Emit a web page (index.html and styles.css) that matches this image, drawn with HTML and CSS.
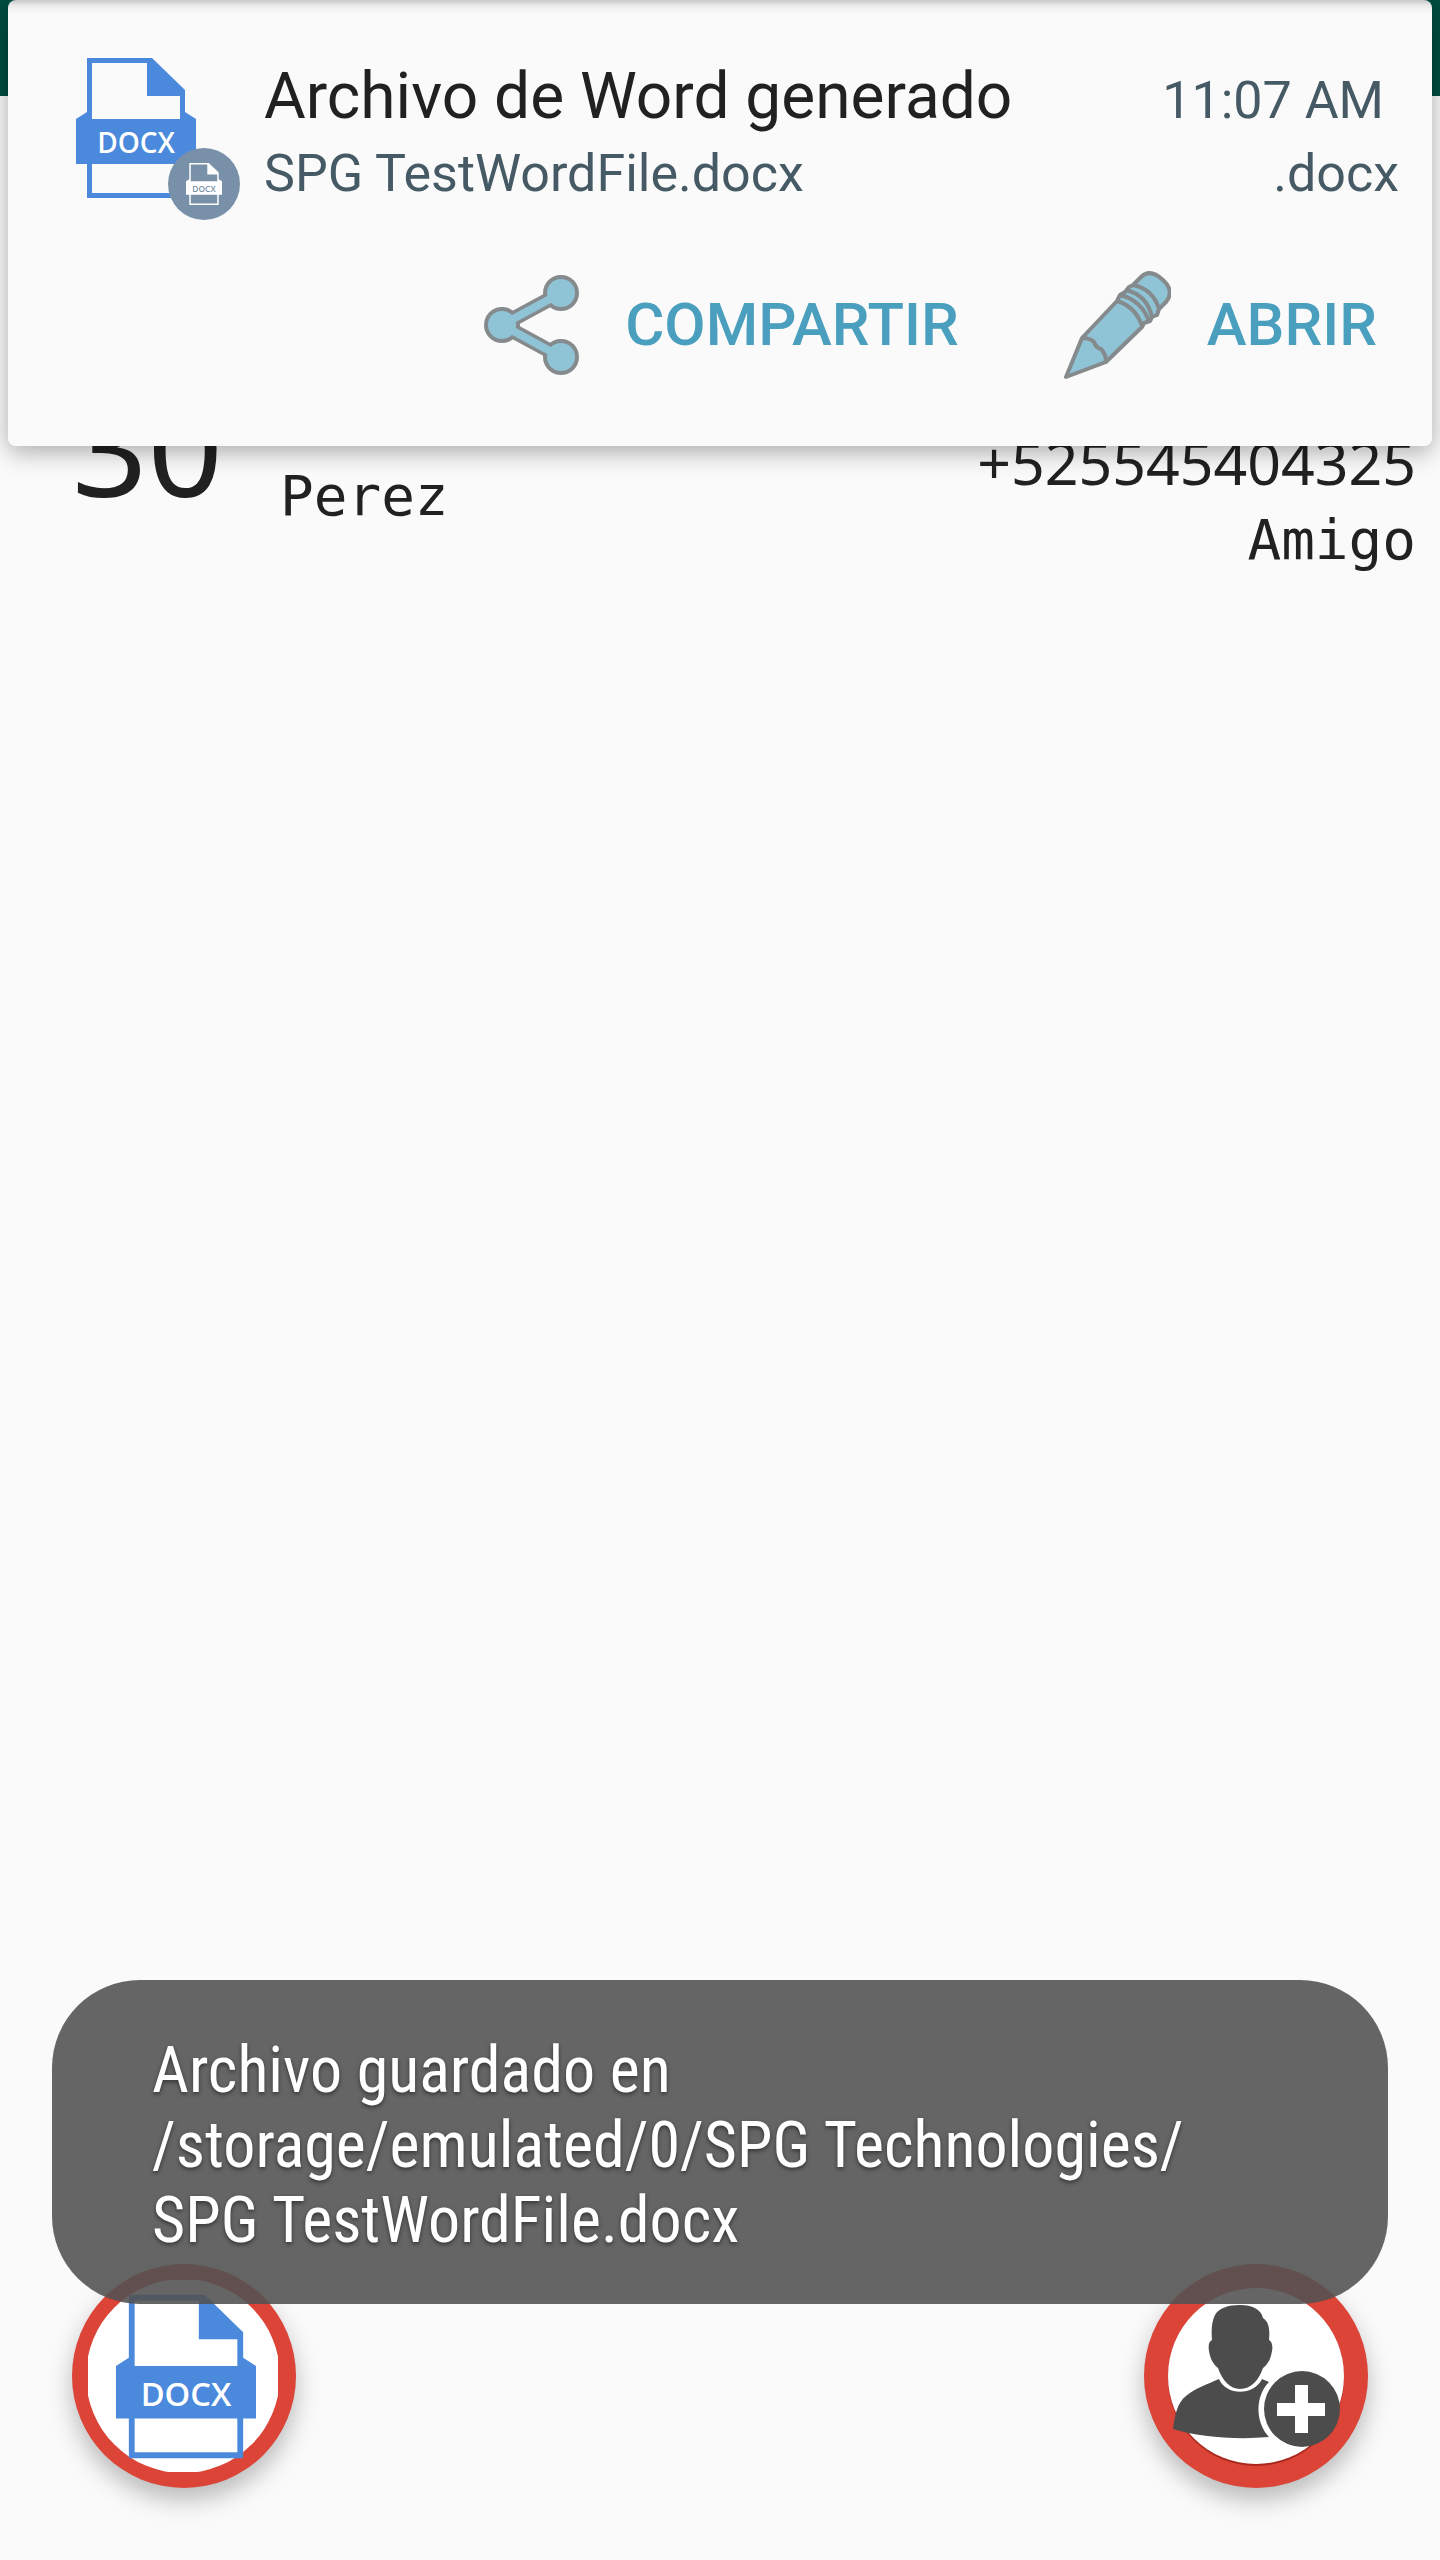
FILE: index.html
```html
<!DOCTYPE html>
<html lang="es">
<head>
    <meta charset="UTF-8">
    <meta name="viewport" content="width=device-width, initial-scale=1.0">
    <title>Contactos</title>
    <link rel="stylesheet" href="styles.css">
</head>
<body>
    <svg class="defs" aria-hidden="true">
        <symbol id="docx" viewBox="0 0 120 140">
            <path fill="currentColor" fill-rule="evenodd" d="M11 0H76L109 32V54L120 61V106H109V140H11V106H0V61L11 54ZM16 5V61H104V38H71V5ZM16 106V135H104V106Z"/>
            <text class="docx-label" x="60" y="95" text-anchor="middle">DOCX</text>
        </symbol>
    </svg>

    <div class="status-bar"></div>

    <main>
        <div class="contact">
            <span class="age">30</span>
            <span class="name">Perez</span>
            <div class="details">
                <a class="phone" href="tel:+525545404325">+525545404325</a>
                <span>Amigo</span>
            </div>
        </div>
    </main>

    <footer class="actions">
        <button class="fab" aria-label="Generar archivo de Word">
            <svg viewBox="0 0 224 224">
                <clipPath id="disc"><rect x="16" y="16" width="190" height="192"/></clipPath>
                <circle cx="111" cy="112" r="97" fill="#fff" clip-path="url(#disc)"/>
                <use href="#docx" x="44" y="29" width="140" height="167"/>
            </svg>
        </button>
        <button class="fab" aria-label="Agregar contacto">
            <svg viewBox="0 0 224 224">
                <circle cx="112" cy="114" r="88" fill="#a8281d"/>
                <circle cx="112" cy="112" r="88" fill="#fff"/>
                <g fill="#4c4c4c">
                    <path d="M96 41C84 41 75 44 71 51C68 57 67 65 68 76C65 77 64 82 65 87C66 94 69 100 74 104C78 116 86 125 96 125C107 125 115 116 119 104C124 100 127 94 128 87C129 82 128 78 125 76C126 65 125 58 119 54C117 45 108 41 96 41Z"/>
                    <path d="M75 115C82 132 110 132 118 115L125 118C111 132 111 158 125 173C92 176 54 173 29 165C31 151 33 139 42 132C51 124 64 120 75 115Z"/>
                    <circle cx="158" cy="145" r="38"/>
                </g>
                <path d="M151 121h13v18h17v13h-17v17h-13v-17h-18v-13h18z" fill="#fff"/>
            </svg>
        </button>
    </footer>

    <div class="toast">Archivo guardado en<br>/storage/emulated/0/SPG Technologies/<br>SPG TestWordFile.docx</div>

    <section class="notification">
        <div class="notification-head">
            <div class="file-icon">
                <svg class="file-large"><use href="#docx"/></svg>
                <div class="badge"><svg class="file-small"><use href="#docx"/></svg></div>
            </div>
            <div class="notification-text">
                <div class="line">
                    <h1>Archivo de Word generado</h1>
                    <time>11:07 AM</time>
                </div>
                <div class="line">
                    <span>SPG TestWordFile.docx</span>
                    <span>.docx</span>
                </div>
            </div>
        </div>
        <div class="notification-buttons">
            <button class="btn">
                <svg viewBox="0 0 108 108">
                    <g stroke="#858a8c" fill="#858a8c" stroke-width="15">
                        <path d="M80 22L21 54L80 86" fill="none"/>
                        <g stroke="none"><circle cx="80" cy="22" r="18"/><circle cx="21" cy="54" r="18"/><circle cx="80" cy="86" r="18"/></g>
                    </g>
                    <g stroke="#8fc3d6" fill="#8fc3d6" stroke-width="8">
                        <path d="M80 22L21 54L80 86" fill="none"/>
                        <g stroke="none"><circle cx="80" cy="22" r="14"/><circle cx="21" cy="54" r="14"/><circle cx="80" cy="86" r="14"/></g>
                    </g>
                </svg>
                COMPARTIR
            </button>
            <button class="btn">
                <svg viewBox="0 0 108 108" fill="#8fc3d6" stroke="#858a8c" stroke-width="4" stroke-linejoin="round">
                    <path d="M19 67L3 106L43 91L44 90L79 56L81 52L87 50L89 46L94 44L96 38L103 31Q112 20 100 9Q87-3 78 6L70 14L66 16L62 21L57 24L54 30Z"/>
                    <path fill="none" d="M19 67Q27 67 31 71Q33 77 38 78Q43 83 43 91M54 30Q73 36 79 55M57 24Q78 29 86 50M63 19Q84 24 89 46M70 14Q90 18 96 38"/>
                </svg>
                ABRIR
            </button>
        </div>
    </section>
</body>
</html>
```
FILE: styles.css
```css
* {
    box-sizing: border-box;
}
body {
    margin: 0;
    min-height: 100vh;
    position: relative;
    display: flex;
    flex-direction: column;
    background: #fafafa;
    color: #212121;
    font-family: Roboto, sans-serif;
}
button {
    border: none;
    padding: 0;
    cursor: pointer;
}
svg {
    display: block;
}
.defs {
    display: none;
}
.docx-label {
    font: 600 28px "Open Sans", sans-serif;
    fill: var(--label, #fff);
}
.status-bar {
    height: 96px;
    background: #004d40;
}
main {
    flex: 1;
}

/* contact row */
.contact {
    display: flex;
    align-items: flex-end;
    padding: 318px 24px 0 72px;
    font-family: "DejaVu Sans Mono", monospace;
    font-size: 56px;
    line-height: 76px;
}
.age {
    width: 208px;
    padding-bottom: 100px;
    font-family: "Noto Sans", sans-serif;
    font-size: 132px;
    line-height: 64px;
}
.name {
    padding-bottom: 44px;
}
.details {
    display: flex;
    flex-direction: column;
    align-items: flex-end;
    gap: 2px;
    margin-left: auto;
}
.phone {
    font-family: "Noto Sans", sans-serif;
    font-size: 59px;
    color: inherit;
    text-decoration: none;
}

/* floating buttons */
.actions {
    display: flex;
    justify-content: space-between;
    padding: 0 72px 72px;
}
.fab {
    width: 224px;
    height: 224px;
    border-radius: 50%;
    background: #db4437;
    color: #4a89dc;
    box-shadow: 0 12px 24px rgba(0, 0, 0, 0.26);
}
.fab svg {
    width: 100%;
}

.toast {
    position: absolute;
    left: 52px;
    right: 52px;
    bottom: 256px;
    padding: 53px 100px 46px;
    border-radius: 88px;
    background: rgba(82, 82, 82, 0.89);
    color: #fff;
    font-family: "Roboto Condensed", Roboto, sans-serif;
    font-size: 64px;
    line-height: 75px;
    text-shadow: 0 2px 4px rgba(0, 0, 0, 0.5);
}

/* heads-up notification */
.notification {
    position: absolute;
    top: 0;
    left: 8px;
    right: 8px;
    padding: 58px 33px 67px 68px;
    border-radius: 8px;
    background: linear-gradient(#c8c8c8, #ececec 6px, #fafafa 14px);
    box-shadow: 0 6px 24px rgba(0, 0, 0, 0.32);
}
.notification-head {
    display: flex;
    gap: 68px;
}
.file-icon {
    position: relative;
    width: 120px;
    color: #4a89dc;
}
.file-large {
    width: 120px;
    height: 140px;
}
.badge {
    --label: #7891a8;
    position: absolute;
    left: 92px;
    top: 90px;
    width: 72px;
    height: 72px;
    display: flex;
    align-items: center;
    justify-content: center;
    border-radius: 50%;
    background: #7891a8;
    color: #fff;
}
.file-small {
    width: 36px;
    height: 42px;
}
.notification-text {
    flex: 1;
    font-size: 52px;
    line-height: 76px;
    color: #455a64;
}
.line {
    display: flex;
    justify-content: space-between;
    align-items: baseline;
}
h1 {
    margin: 0;
    font-size: 64px;
    font-weight: 400;
    line-height: 78px;
    color: #212121;
}
time {
    margin-right: 15px;
    line-height: 60px;
}
.notification-buttons {
    display: flex;
    justify-content: flex-end;
    gap: 104px;
    padding: 59px 22px 0 0;
}
.btn {
    display: flex;
    align-items: center;
    gap: 36px;
    background: none;
    color: #4a9fbe;
    font: 500 60px/72px Roboto, sans-serif;
}
.btn svg {
    width: 108px;
    height: 108px;
}
```
